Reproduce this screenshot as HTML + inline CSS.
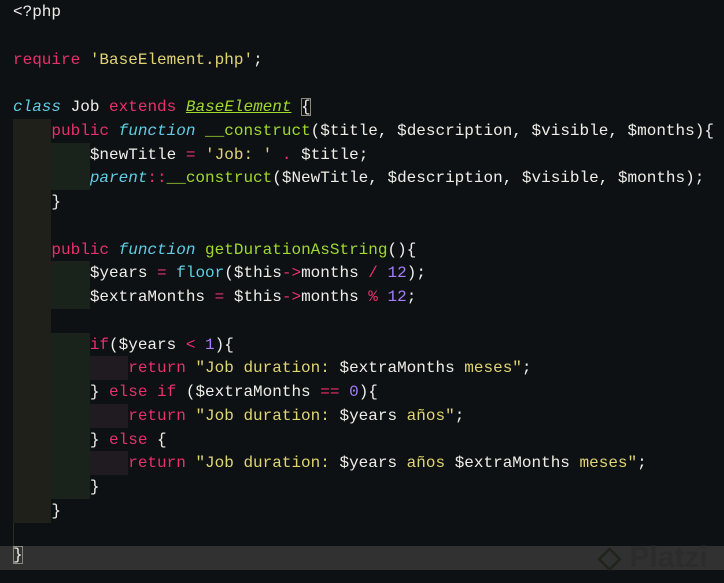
<!DOCTYPE html>
<html><head><meta charset="utf-8"><style>
html,body{margin:0;padding:0;background:#0e1114;width:724px;height:583px;overflow:hidden}
.l{position:absolute;left:13px;height:23.75px;line-height:23.75px;font:16px "Liberation Mono",monospace;white-space:pre;color:#eeeee8;margin-top:3px}
.b{position:absolute;height:23.75px}
.k{color:#e8306a}.c{color:#5fcde4;font-style:italic}.f{color:#a0d82e}.s{color:#e0d572}.n{color:#a57ef5}
.u{color:#a0d82e;font-style:italic;text-decoration:underline}
.box{outline:1px solid #8a8a7a;outline-offset:-1px}
</style></head><body>
<div class="b" style="left:0;top:546.25px;width:724px;background:#313131"></div>
<div class="b" style="left:13px;top:118.75px;width:38.4px;height:403.75px;background:#1e2019"></div>
<div class="b" style="left:13px;top:522.5px;width:1px;height:24px;background:#2a2c25"></div>
<div class="b" style="left:51.4px;top:142.5px;width:38.4px;height:47.5px;background:#19221b"></div>
<div class="b" style="left:51.4px;top:261.25px;width:38.4px;height:47.5px;background:#19221b"></div>
<div class="b" style="left:51.4px;top:332.5px;width:38.4px;height:166.25px;background:#19221b"></div>
<div class="b" style="left:89.8px;top:356.25px;width:38.4px;background:#201b21"></div>
<div class="b" style="left:89.8px;top:403.75px;width:38.4px;background:#201b21"></div>
<div class="b" style="left:89.8px;top:451.25px;width:38.4px;background:#201b21"></div>
<div style="position:absolute;left:598px;top:540px;font:bold 30px 'Liberation Sans',sans-serif;color:#1c2119;opacity:.8">◇ <span style="color:#2c2c2c">Platzi</span></div>

<div class="l" style="top:0">&lt;?php</div>
<div class="l" style="top:47.5px"><span class="k">require</span> <span class="s">'BaseElement.php'</span>;</div>
<div class="l" style="top:95px"><span class="c">class</span> Job <span class="k">extends</span> <span class="u">BaseElement</span> <span class="box">{</span></div>
<div class="l" style="top:118.75px">    <span class="k">public</span> <span class="c">function</span> <span class="f">__construct</span>($title, $description, $visible, $months){</div>
<div class="l" style="top:142.5px">        $newTitle <span class="k">=</span> <span class="s">'Job: '</span> <span class="k">.</span> $title;</div>
<div class="l" style="top:166.25px">        <span class="c">parent</span><span class="k">::</span><span class="f">__construct</span>($NewTitle, $description, $visible, $months);</div>
<div class="l" style="top:190px">    }</div>
<div class="l" style="top:237.5px">    <span class="k">public</span> <span class="c">function</span> <span class="f">getDurationAsString</span>(){</div>
<div class="l" style="top:261.25px">        $years <span class="k">=</span> <span class="c" style="font-style:normal">floor</span>($this<span class="k">-&gt;</span>months <span class="k">/</span> <span class="n">12</span>);</div>
<div class="l" style="top:285px">        $extraMonths <span class="k">=</span> $this<span class="k">-&gt;</span>months <span class="k">%</span> <span class="n">12</span>;</div>
<div class="l" style="top:332.5px">        <span class="k">if</span>($years <span class="k">&lt;</span> <span class="n">1</span>){</div>
<div class="l" style="top:356.25px">            <span class="k">return</span> <span class="s">"Job duration: </span>$extraMonths<span class="s"> meses"</span>;</div>
<div class="l" style="top:380px">        } <span class="k">else if</span> ($extraMonths <span class="k">==</span> <span class="n">0</span>){</div>
<div class="l" style="top:403.75px">            <span class="k">return</span> <span class="s">"Job duration: </span>$years<span class="s"> años"</span>;</div>
<div class="l" style="top:427.5px">        } <span class="k">else</span> {</div>
<div class="l" style="top:451.25px">            <span class="k">return</span> <span class="s">"Job duration: </span>$years<span class="s"> años </span>$extraMonths<span class="s"> meses"</span>;</div>
<div class="l" style="top:475px">        }</div>
<div class="l" style="top:498.75px">    }</div>
<div class="l" style="top:546.25px;margin-top:0"><span class="box">}</span></div>
</body></html>
